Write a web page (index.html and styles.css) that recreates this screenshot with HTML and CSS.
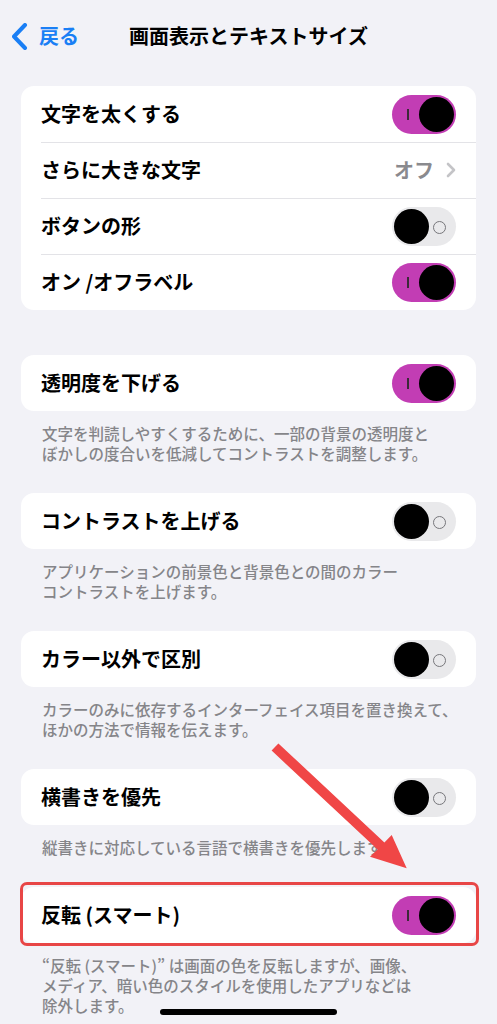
FILE: index.html
```html
<!DOCTYPE html>
<html lang="ja">
<head>
<meta charset="utf-8">
<link rel="stylesheet" href="styles.css">
</head>
<body>
<div class="page">
  <header class="nav">
    <div class="back">
      <svg class="back-chev" width="16" height="28" viewBox="0 0 16 28"><path d="M13 2 L2 13.5 L13 25" fill="none" stroke="#1a7ff5" stroke-width="4" stroke-linecap="round" stroke-linejoin="round"/></svg>
      <span class="back-label">戻る</span>
    </div>
    <h1 class="title">画面表示とテキストサイズ</h1>
    <div></div>
  </header>

  <section class="group group-plain">
    <div class="card">
      <div class="row"><span class="label">文字を太くする</span><span class="toggle on"><span class="knob"></span></span></div>
      <div class="row"><span class="label">さらに大きな文字</span><span class="value">オフ<svg class="chev" width="10" height="16" viewBox="0 0 10 16"><path d="M2 2 L8 8 L2 14" fill="none" stroke="#c4c4c7" stroke-width="2.6" stroke-linecap="round" stroke-linejoin="round"/></svg></span></div>
      <div class="row"><span class="label">ボタンの形</span><span class="toggle off"><span class="knob"></span></span></div>
      <div class="row"><span class="label">オン /オフラベル</span><span class="toggle on"><span class="knob"></span></span></div>
    </div>
  </section>

  <section class="group">
    <div class="card">
      <div class="row"><span class="label">透明度を下げる</span><span class="toggle on"><span class="knob"></span></span></div>
    </div>
    <p class="foot">文字を判読しやすくするために、一部の背景の透明度と<br>ぼかしの度合いを低減してコントラストを調整します。</p>
  </section>

  <section class="group">
    <div class="card">
      <div class="row"><span class="label">コントラストを上げる</span><span class="toggle off"><span class="knob"></span></span></div>
    </div>
    <p class="foot">アプリケーションの前景色と背景色との間のカラー<br>コントラストを上げます。</p>
  </section>

  <section class="group">
    <div class="card">
      <div class="row"><span class="label">カラー以外で区別</span><span class="toggle off"><span class="knob"></span></span></div>
    </div>
    <p class="foot">カラーのみに依存するインターフェイス項目を置き換えて、<br>ほかの方法で情報を伝えます。</p>
  </section>

  <section class="group">
    <div class="card">
      <div class="row"><span class="label">横書きを優先</span><span class="toggle off"><span class="knob"></span></span></div>
    </div>
    <p class="foot">縦書きに対応している言語で横書きを優先します。</p>
  </section>

  <section class="group">
    <div class="card marked">
      <div class="row"><span class="label">反転 (スマート)</span><span class="toggle on"><span class="knob"></span></span></div>
      <div class="mark-box"></div>
    </div>
    <p class="foot">“反転 (スマート)” は画面の色を反転しますが、画像、<br>メディア、暗い色のスタイルを使用したアプリなどは<br>除外します。</p>
  </section>

  <svg class="arrow" width="497" height="1024" viewBox="0 0 497 1024">
    <path d="M271.6 750.6 L278.4 743.4 L384.4 842.4 L391.7 835 L406.7 868.3 L370 856.7 L377.6 849.6 Z" fill="#f04646"/>
  </svg>

  <div class="home-indicator"></div>
</div>
</body>
</html>
```

FILE: styles.css
```css
* { box-sizing: border-box; }

html, body {
  margin: 0;
  padding: 0;
  background: #f2f2f7;
}

body {
  font-family: "Noto Sans CJK JP", "Noto Sans", sans-serif;
  color: #000;
}

.page {
  position: relative;
  width: 497px;
  height: 1024px;
  overflow: hidden;
}

.nav {
  display: grid;
  grid-template-columns: 1fr auto 1fr;
  align-items: center;
  height: 72px;
  padding: 0 12px;
}

.back {
  display: flex;
  align-items: center;
  gap: 11px;
  color: #1a7ff5;
}

.back-chev { display: block; margin-top: 1px; }

.back-label {
  font-size: 20px;
  font-weight: 700;
  line-height: 24px;
}

.title {
  margin: 0;
  font-size: 20px;
  font-weight: 700;
  line-height: 24px;
  text-align: center;
}

.group {
  margin: 0 0 30px;
}

.group-plain {
  margin-top: 14px;
  margin-bottom: 45px;
}

.card {
  position: relative;
  margin: 0 21px;
  background: #fff;
  border-radius: 13px;
}

.row {
  position: relative;
  display: flex;
  align-items: center;
  justify-content: space-between;
  height: 56px;
  padding: 0 20px;
}

.row + .row::before {
  content: "";
  position: absolute;
  top: 0;
  left: 20px;
  right: 0;
  height: 1px;
  background: #e3e3e7;
}

.label {
  font-size: 20px;
  font-weight: 700;
  line-height: 24px;
  white-space: nowrap;
}

.value {
  display: flex;
  align-items: center;
  gap: 12px;
  font-size: 20px;
  font-weight: 700;
  color: #8a8a8e;
  line-height: 24px;
}

.chev { display: block; }

.toggle {
  position: relative;
  display: flex;
  align-items: center;
  width: 64px;
  height: 39px;
  border-radius: 20px;
  padding: 0 2px;
}

.toggle.on {
  background: #c23db4;
  justify-content: flex-end;
}

.toggle.off {
  background: #e9e9eb;
  justify-content: flex-start;
}

.knob {
  width: 35px;
  height: 35px;
  border-radius: 50%;
  background: #000;
}

.toggle.on::before {
  content: "";
  position: absolute;
  left: 15px;
  top: 14px;
  width: 1.5px;
  height: 11px;
  background: #3b2a38;
}

.toggle.off::after {
  content: "";
  position: absolute;
  right: 10px;
  top: 14px;
  width: 11px;
  height: 11px;
  border-radius: 50%;
  border: 1.5px solid #77777b;
}

.foot {
  margin: 0;
  padding: 12px 16px 0 42px;
  font-size: 15.5px;
  font-weight: 500;
  line-height: 20px;
  color: #858589;
  white-space: nowrap;
}

.mark-box {
  position: absolute;
  top: -5px;
  bottom: -3px;
  left: -1px;
  right: -3px;
  border: 3.5px solid #e84646;
  border-radius: 7px;
  pointer-events: none;
}

.arrow {
  position: absolute;
  top: 0;
  left: 0;
  pointer-events: none;
}

.home-indicator {
  position: absolute;
  left: 160px;
  top: 1009px;
  width: 177px;
  height: 6px;
  border-radius: 3px;
  background: #000;
}
```
